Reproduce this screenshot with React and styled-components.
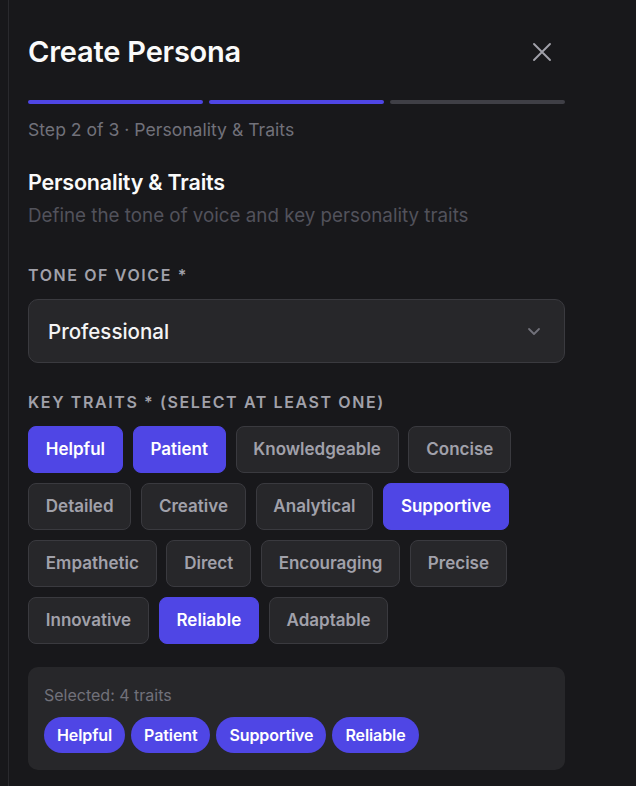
import React from "react";
import styled, { createGlobalStyle } from "styled-components";

const Global = createGlobalStyle`
  html, body { margin: 0; padding: 0; background: #18181b; }
  body { font-family: Inter, "Noto Sans", sans-serif; -webkit-font-smoothing: antialiased; }
  * { box-sizing: border-box; }
`;

const Page = styled.div`
  min-height: 786px;
  background: #18181b;
  padding-left: 8px;
`;

const Panel = styled.div`
  border-left: 1px solid #2a2a2e;
  min-height: 786px;
  padding: 35px 0 0 19px;
`;

const Content = styled.div`
  width: 537px;
  display: flex;
  flex-direction: column;
`;

const Header = styled.div`
  display: flex;
  align-items: center;
  justify-content: space-between;
  height: 34px;
`;

const Title = styled.h1`
  margin: 0;
  font-size: 29px;
  line-height: 34px;
  font-weight: 600;
  color: #fafafa;
  letter-spacing: -0.2px;
`;

const CloseButton = styled.button`
  width: 24px;
  height: 24px;
  margin-right: 11px;
  border: 0;
  padding: 0;
  background: transparent;
  color: #a1a1aa;
  display: flex;
  align-items: center;
  justify-content: center;
`;

const Progress = styled.div`
  display: grid;
  grid-template-columns: repeat(3, 1fr);
  gap: 6px;
  margin-top: 31px;
`;

const Segment = styled.div`
  height: 4px;
  border-radius: 2px;
  background: ${(p) => (p.$active ? "#4f46e5" : "#3f3f46")};
`;

const StepText = styled.div`
  margin-top: 16px;
  font-size: 17.6px;
  line-height: 20px;
  color: #71717a;
`;

const SectionTitle = styled.h2`
  margin: 28px 0 0;
  font-size: 21.5px;
  line-height: 28px;
  font-weight: 600;
  color: #fafafa;
  letter-spacing: -0.2px;
`;

const SectionSub = styled.p`
  margin: 8px 0 0;
  font-size: 18.8px;
  line-height: 24px;
  color: #52525b;
`;

const Label = styled.div`
  margin-top: ${(p) => p.$top}px;
  font-size: 16px;
  line-height: 20px;
  font-weight: 600;
  letter-spacing: 1.6px;
  text-transform: uppercase;
  color: #a1a1aa;
`;

const Select = styled.div`
  margin-top: 14px;
  height: 64px;
  border-radius: 10px;
  border: 1px solid #3a3a3f;
  background: #27272a;
  display: flex;
  align-items: center;
  justify-content: space-between;
  padding: 0 18px 0 19px;
  font-size: 20.5px;
  font-weight: 500;
  color: #f4f4f5;
`;

const Chips = styled.div`
  margin-top: 14px;
  display: flex;
  flex-wrap: wrap;
  gap: 10px 9.8px;
  padding-right: 40px;
`;

const Chip = styled.button`
  height: 47px;
  padding: 0 16.8px;
  border-radius: 8px;
  border: 1px solid ${(p) => (p.$on ? "#4f46e5" : "#3a3a3f")};
  background: ${(p) => (p.$on ? "#4f46e5" : "#27272a")};
  color: ${(p) => (p.$on ? "#ffffff" : "#a1a1aa")};
  font-family: inherit;
  font-size: 17px;
  font-weight: 600;
  line-height: 1;
`;

const Summary = styled.div`
  margin-top: 23px;
  background: #27272a;
  border-radius: 10px;
  padding: 18px 16px 17px;
`;

const SummaryText = styled.div`
  font-size: 16px;
  line-height: 20px;
  color: #71717a;
`;

const Pills = styled.div`
  margin-top: 12px;
  display: flex;
  gap: 6px;
`;

const Pill = styled.span`
  height: 36px;
  padding: 0 13px;
  border-radius: 18px;
  background: #4f46e5;
  color: #ffffff;
  font-size: 16px;
  font-weight: 600;
  letter-spacing: -0.1px;
  display: inline-flex;
  align-items: center;
`;

const traits = [
  "Helpful", "Patient", "Knowledgeable", "Concise",
  "Detailed", "Creative", "Analytical", "Supportive",
  "Empathetic", "Direct", "Encouraging", "Precise",
  "Innovative", "Reliable", "Adaptable",
];
const selected = ["Helpful", "Patient", "Supportive", "Reliable"];

export default function App() {
  return (
    <Page>
      <Global />
      <Panel>
        <Content>
          <Header>
            <Title>Create Persona</Title>
            <CloseButton aria-label="Close">
              <svg width="20" height="20" viewBox="0 0 20 20" fill="none" stroke="currentColor" strokeWidth="1.9" strokeLinecap="round">
                <path d="M2 2 L18 18 M18 2 L2 18" />
              </svg>
            </CloseButton>
          </Header>
          <Progress>
            <Segment $active />
            <Segment $active />
            <Segment />
          </Progress>
          <StepText>Step 2 of 3 · Personality &amp; Traits</StepText>
          <SectionTitle>Personality &amp; Traits</SectionTitle>
          <SectionSub>Define the tone of voice and key personality traits</SectionSub>
          <Label $top={37}>Tone of Voice *</Label>
          <Select>
            <span>Professional</span>
            <svg width="24" height="24" viewBox="0 0 24 24" fill="none" stroke="#71717a" strokeWidth="1.8" strokeLinecap="round" strokeLinejoin="round">
              <path d="m7 10 5 5 5-5" />
            </svg>
          </Select>
          <Label $top={29}>Key Traits * (Select at least one)</Label>
          <Chips>
            {traits.map((t) => (
              <Chip key={t} $on={selected.includes(t)}>{t}</Chip>
            ))}
          </Chips>
          <Summary>
            <SummaryText>Selected: {selected.length} traits</SummaryText>
            <Pills>
              {selected.map((t) => (
                <Pill key={t}>{t}</Pill>
              ))}
            </Pills>
          </Summary>
        </Content>
      </Panel>
    </Page>
  );
}
